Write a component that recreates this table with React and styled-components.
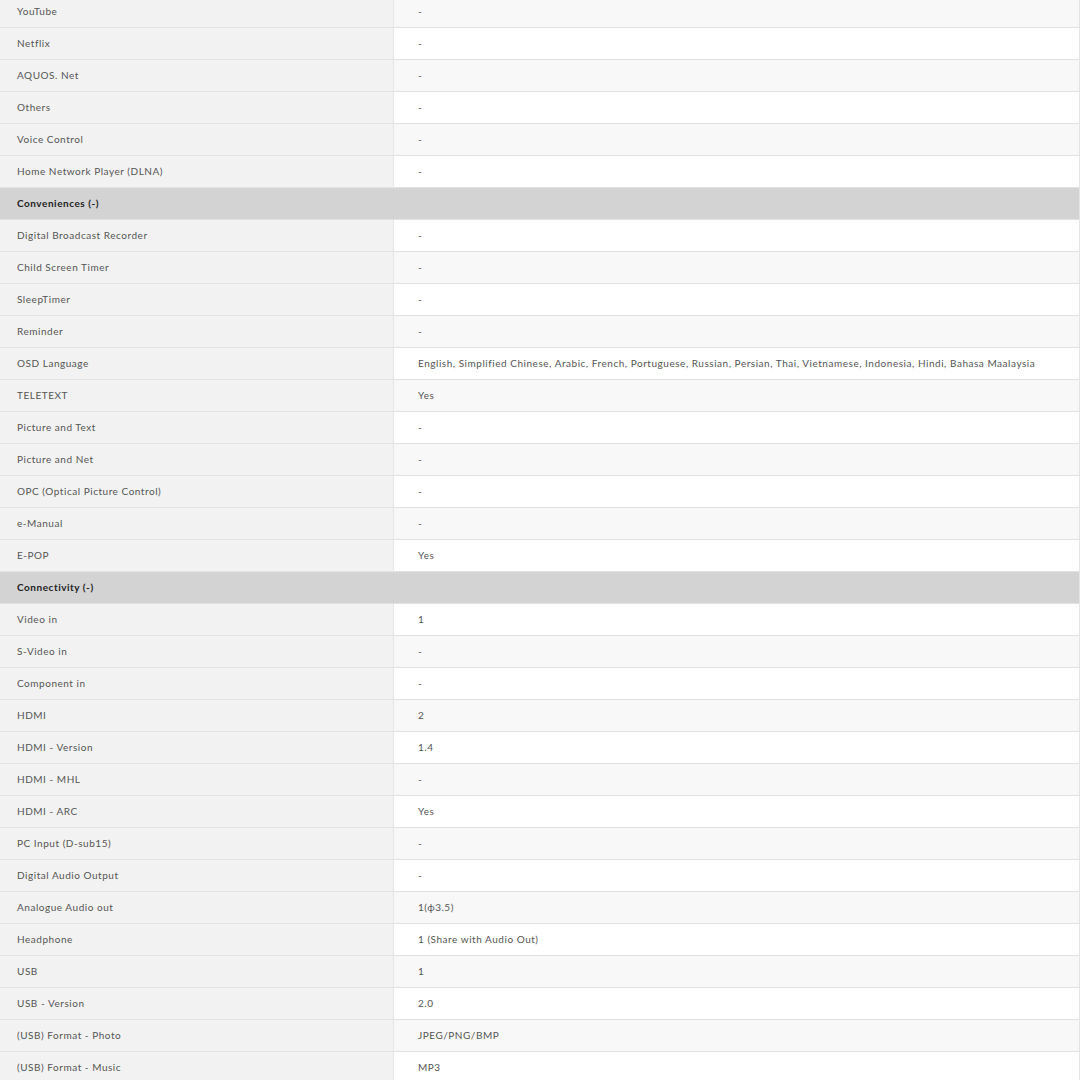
import React from "react";
import styled, { createGlobalStyle } from "styled-components";

const Global = createGlobalStyle`
  html, body { margin: 0; padding: 0; background: #fff; }
  body { font-family: Lato, "Liberation Sans", sans-serif; }
`;

const Page = styled.div`
  width: 1080px;
  height: 1080px;
  overflow: hidden;
  background: #fff;
`;

const Table = styled.div`
  margin-top: -4px;
  width: 1079px;
  border-right: 1px solid #e4e4e4;
  display: flex;
  flex-direction: column;
`;

const Row = styled.div`
  display: grid;
  grid-template-columns: 394px 1fr;
  height: 32px;
  box-sizing: border-box;
  border-bottom: 1px solid #e2e2e2;
`;

const Cell = styled.div`
  display: flex;
  align-items: center;
  white-space: nowrap;
  font-size: 10px;
  letter-spacing: 0.53px;
  color: #555;
  padding-bottom: 2px;
  box-sizing: border-box;
`;

const Label = styled(Cell)`
  background: #f2f2f2;
  border-right: 1px solid #e6e6e6;
  padding-left: 17px;
`;

const Value = styled(Cell)`
  background: ${(p) => (p.$shaded ? "#f8f8f8" : "#ffffff")};
  padding-left: 24px;
`;

const Header = styled(Cell)`
  height: 32px;
  background: #d3d3d4;
  border-bottom: 1px solid #e2e2e2;
  padding-left: 17px;
  font-weight: 700;
  color: #222;
`;

const sections = [
  {
    title: null,
    startShaded: true,
    rows: [
      ["YouTube", "-"],
      ["Netflix", "-"],
      ["AQUOS. Net", "-"],
      ["Others", "-"],
      ["Voice Control", "-"],
      ["Home Network Player (DLNA)", "-"],
    ],
  },
  {
    title: "Conveniences (-)",
    startShaded: false,
    rows: [
      ["Digital Broadcast Recorder", "-"],
      ["Child Screen Timer", "-"],
      ["SleepTimer", "-"],
      ["Reminder", "-"],
      [
        "OSD Language",
        "English, Simplified Chinese, Arabic, French, Portuguese, Russian, Persian, Thai, Vietnamese, Indonesia, Hindi, Bahasa Maalaysia",
      ],
      ["TELETEXT", "Yes"],
      ["Picture and Text", "-"],
      ["Picture and Net", "-"],
      ["OPC (Optical Picture Control)", "-"],
      ["e-Manual", "-"],
      ["E-POP", "Yes"],
    ],
  },
  {
    title: "Connectivity (-)",
    startShaded: false,
    rows: [
      ["Video in", "1"],
      ["S-Video in", "-"],
      ["Component in", "-"],
      ["HDMI", "2"],
      ["HDMI - Version", "1.4"],
      ["HDMI - MHL", "-"],
      ["HDMI - ARC", "Yes"],
      ["PC Input (D-sub15)", "-"],
      ["Digital Audio Output", "-"],
      ["Analogue Audio out", "1(\u03d53.5)"],
      ["Headphone", "1 (Share with Audio Out)"],
      ["USB", "1"],
      ["USB - Version", "2.0"],
      ["(USB) Format - Photo", "JPEG/PNG/BMP"],
      ["(USB) Format - Music", "MP3"],
    ],
  },
];

export default function App() {
  return (
    <Page>
      <Global />
      <Table>
        {sections.map((s, si) => (
          <React.Fragment key={si}>
            {s.title && <Header>{s.title}</Header>}
            {s.rows.map(([l, v], i) => (
              <Row key={l}>
                <Label>{l}</Label>
                <Value $shaded={s.startShaded ? i % 2 === 0 : i % 2 === 1}>{v}</Value>
              </Row>
            ))}
          </React.Fragment>
        ))}
      </Table>
    </Page>
  );
}
